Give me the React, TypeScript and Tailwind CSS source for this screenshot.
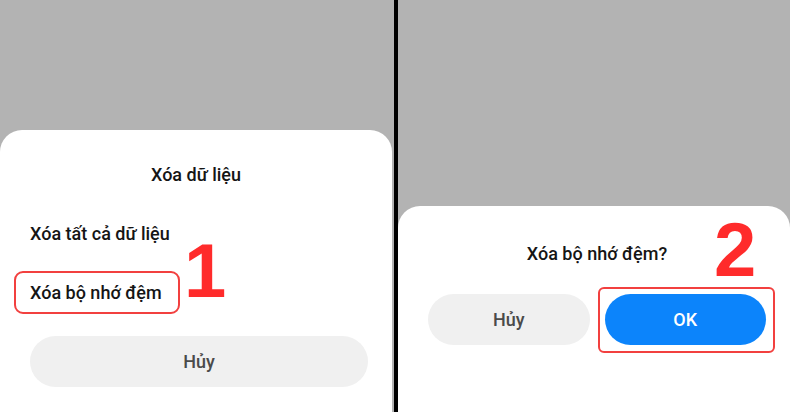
const sans = "font-['Roboto','Noto_Sans',sans-serif]";
const digit = "font-['Liberation_Sans','Arial',sans-serif] font-bold text-[76px] leading-none text-[#ff2b2b]";

function ClearDataSheet() {
  return (
    <div className="flex h-full w-[394px] flex-col justify-end bg-[#b3b3b3]">
      <div className={`relative flex h-[282px] w-[392px] flex-col rounded-t-[22px] bg-white ${sans}`}>
        <div className="flex h-[88px] items-center justify-center text-[18px] font-medium text-[#151515]">
          Xóa dữ liệu
        </div>
        <div className="flex h-[30px] items-center pl-[30px] text-[18px] font-medium text-[#151515]">
          Xóa tất cả dữ liệu
        </div>
        <div className="ml-[14px] mt-[23px] flex h-[43px] w-[166px] items-center rounded-[9px] border-2 border-[#f2403f] pl-[14px] text-[18px] font-medium text-[#151515]">
          Xóa bộ nhớ đệm
        </div>
        <button className="ml-[30px] mt-[22px] flex h-[51px] w-[338px] items-center justify-center rounded-full bg-[#f0f0f0] text-[18px] font-medium text-[#4a4a4a]">
          Hủy
        </button>
        <span className={`absolute left-[184px] top-[103px] ${digit}`}>1</span>
      </div>
    </div>
  );
}

function ConfirmSheet() {
  return (
    <div className="flex h-full flex-1 flex-col justify-end bg-[#b3b3b3]">
      <div className={`relative flex h-[206px] flex-col rounded-t-[22px] bg-white ${sans}`}>
        <div className="mt-[35px] flex h-[24px] items-center justify-center pl-[6px] text-[18px] font-medium text-[#151515]">
          Xóa bộ nhớ đệm?
        </div>
        <div className="mt-[29px] flex gap-[15px] pl-[30px] pr-[24px]">
          <button className="flex h-[51px] flex-1 items-center justify-center rounded-full bg-[#f0f0f0] text-[18px] font-medium text-[#4a4a4a]">
            Hủy
          </button>
          <div className="relative flex-1">
            <button className="flex h-[51px] w-full items-center justify-center rounded-full bg-[#0c84fb] text-[18px] font-medium text-white">
              OK
            </button>
            <span className="absolute -bottom-[8px] -left-[7px] -right-[9px] -top-[7px] rounded-[6px] border-2 border-[#f2403f]" />
          </div>
        </div>
        <span className={`absolute left-[316px] top-[6px] ${digit}`}>2</span>
      </div>
    </div>
  );
}

export default function App() {
  return (
    <div className="flex h-[412px] w-[790px] overflow-hidden bg-black">
      <ClearDataSheet />
      <div className="w-[4px] bg-black" />
      <ConfirmSheet />
    </div>
  );
}
